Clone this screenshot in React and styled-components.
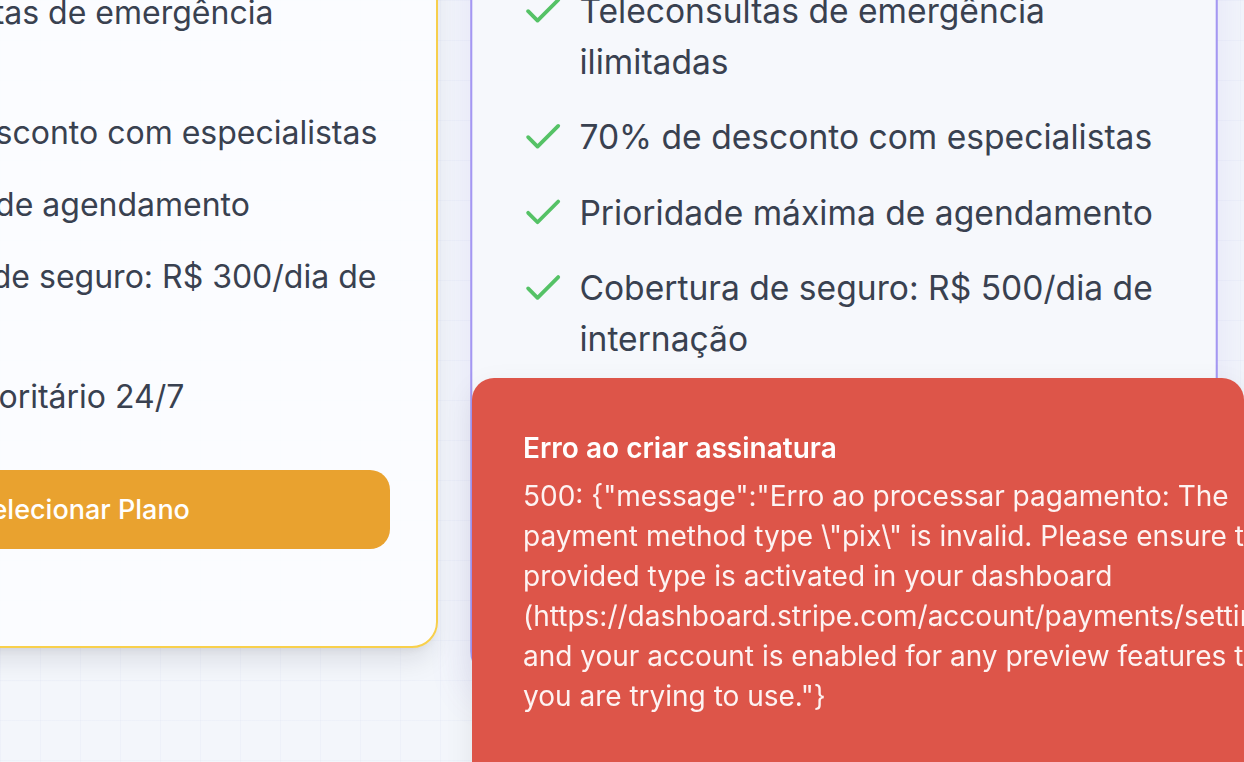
import React from 'react'
import styled, { createGlobalStyle } from 'styled-components'
import { Check } from 'lucide-react'

const GlobalStyle = createGlobalStyle`
    html, body {
        margin: 0;
        padding: 0;
        height: 100%;
        overflow: hidden;
    }
    body {
        font-family: Inter, "Noto Sans", sans-serif;
        background-color: #f3f6fb;
        background-image:
            linear-gradient(rgba(203, 213, 235, 0.14) 1px, transparent 1px),
            linear-gradient(90deg, rgba(203, 213, 235, 0.14) 1px, transparent 1px);
        background-size: 40px 40px;
        -webkit-font-smoothing: antialiased;
    }
`

const plans = [
    {
        name: 'Plano Essencial',
        price: 'R$ 49,90',
        accent: 'essential',
        features: [
            'Teleconsultas de emergência ilimitadas',
            '50% de desconto com especialistas',
            'Prioridade de agendamento',
            'Cobertura de seguro: R$ 300/dia de internação',
            'Suporte prioritário 24/7',
        ],
    },
    {
        name: 'Plano Premium',
        price: 'R$ 89,90',
        accent: 'premium',
        features: [
            'Teleconsultas de emergência ilimitadas',
            '70% de desconto com especialistas',
            'Prioridade máxima de agendamento',
            'Cobertura de seguro: R$ 500/dia de internação',
            'Suporte VIP 24/7',
        ],
    },
]

const App = () => {
    return (
        <>
            <GlobalStyle />
            <Page>
                <Row>
                    {plans.map((plan) => (
                        <Card key={plan.name} $accent={plan.accent}>
                            <Header>
                                {plan.accent === 'premium' && <Badge>Mais Popular</Badge>}
                                <PlanName>{plan.name}</PlanName>
                                <Price>
                                    {plan.price}
                                    <span>/mês</span>
                                </Price>
                            </Header>
                            <Features>
                                {plan.features.map((f) => (
                                    <Feature key={f}>
                                        <Check size={43} strokeWidth={2} color="#55c266" />
                                        <span>{f}</span>
                                    </Feature>
                                ))}
                            </Features>
                            <SelectButton $accent={plan.accent}>Selecionar Plano</SelectButton>
                        </Card>
                    ))}
                </Row>
            </Page>
            <Toast role="alert">
                <ToastTitle>Erro ao criar assinatura</ToastTitle>
                <ToastBody>
                    500: {'{"message":"Erro ao processar pagamento: The payment method type \\"pix\\" is invalid. Please ensure the provided type is activated in your dashboard (https://dashboard.stripe.com/account/payments/settings) and your account is enabled for any preview features that you are trying to use."}'}
                </ToastBody>
            </Toast>
        </>
    )
}

export default App

const Page = styled.div`
    min-height: 100vh;
`

const Row = styled.div`
    display: flex;
    align-items: flex-start;
    gap: 50px;
    margin-left: -274px;
    margin-top: -491px;
`

const Card = styled.div`
    flex: 0 0 712px;
    box-sizing: border-box;
    display: flex;
    flex-direction: column;
    padding: 46px;
    border-radius: 26px;
    border: 2px solid ${p => (p.$accent === 'premium' ? '#a497f2' : '#f8d04c')};
    background: ${p => (p.$accent === 'premium' ? 'rgba(246, 248, 252, 0.9)' : 'rgba(252, 253, 255, 0.88)')};
    box-shadow: ${p => (p.$accent === 'premium'
        ? '0 16px 34px 8px rgba(118, 104, 224, 0.09)'
        : '0 17px 26px -5px rgba(15, 23, 42, 0.10), 0 7px 10px -7px rgba(15, 23, 42, 0.10)')};
    transform: ${p => (p.$accent === 'premium' ? 'translateY(2px) scale(1.05)' : 'none')};
`

const Header = styled.div`
    height: 408px;
    margin-bottom: 24px;
    display: flex;
    flex-direction: column;
    align-items: center;
    justify-content: center;
    gap: 20px;
`

const Badge = styled.div`
    background: #8b5cf6;
    color: #fff;
    font-size: 22px;
    font-weight: 600;
    padding: 8px 24px;
    border-radius: 999px;
`

const PlanName = styled.h2`
    margin: 0;
    font-size: 40px;
    font-weight: 700;
    color: #1f2937;
`

const Price = styled.div`
    font-size: 64px;
    font-weight: 800;
    color: #111827;
    span {
        font-size: 28px;
        font-weight: 500;
        color: #6b7280;
    }
`

const Features = styled.ul`
    list-style: none;
    margin: 0;
    padding: 0;
    display: flex;
    flex-direction: column;
    gap: 24px;
`

const Feature = styled.li`
    display: flex;
    align-items: flex-start;
    gap: 13px;
    font-size: 32px;
    line-height: 48px;
    color: #394150;
    svg {
        flex: 0 0 auto;
        margin-top: 2px;
    }
`

const SelectButton = styled.button`
    margin: 49px 0 51px;
    height: 79px;
    border: none;
    border-radius: 20px;
    background: ${p => (p.$accent === 'premium' ? 'linear-gradient(90deg, #8b5cf6, #6366f1)' : '#e9a22f')};
    color: #fff;
    font-family: Inter, sans-serif;
    font-size: 27px;
    font-weight: 500;
    cursor: pointer;
`

const Toast = styled.div`
    position: fixed;
    left: 472px;
    top: 378px;
    width: 772px;
    height: 420px;
    box-sizing: border-box;
    padding: 50px 51px;
    border-radius: 22px;
    background: #dd5549;
    color: #fff;
    box-shadow: 0 10px 30px rgba(0, 0, 0, 0.08);
`

const ToastTitle = styled.div`
    font-size: 28px;
    font-weight: 600;
    line-height: 40px;
`

const ToastBody = styled.div`
    width: 815px;
    margin-top: 8px;
    font-size: 28px;
    line-height: 40px;
    color: rgba(255, 255, 255, 0.93);
`
